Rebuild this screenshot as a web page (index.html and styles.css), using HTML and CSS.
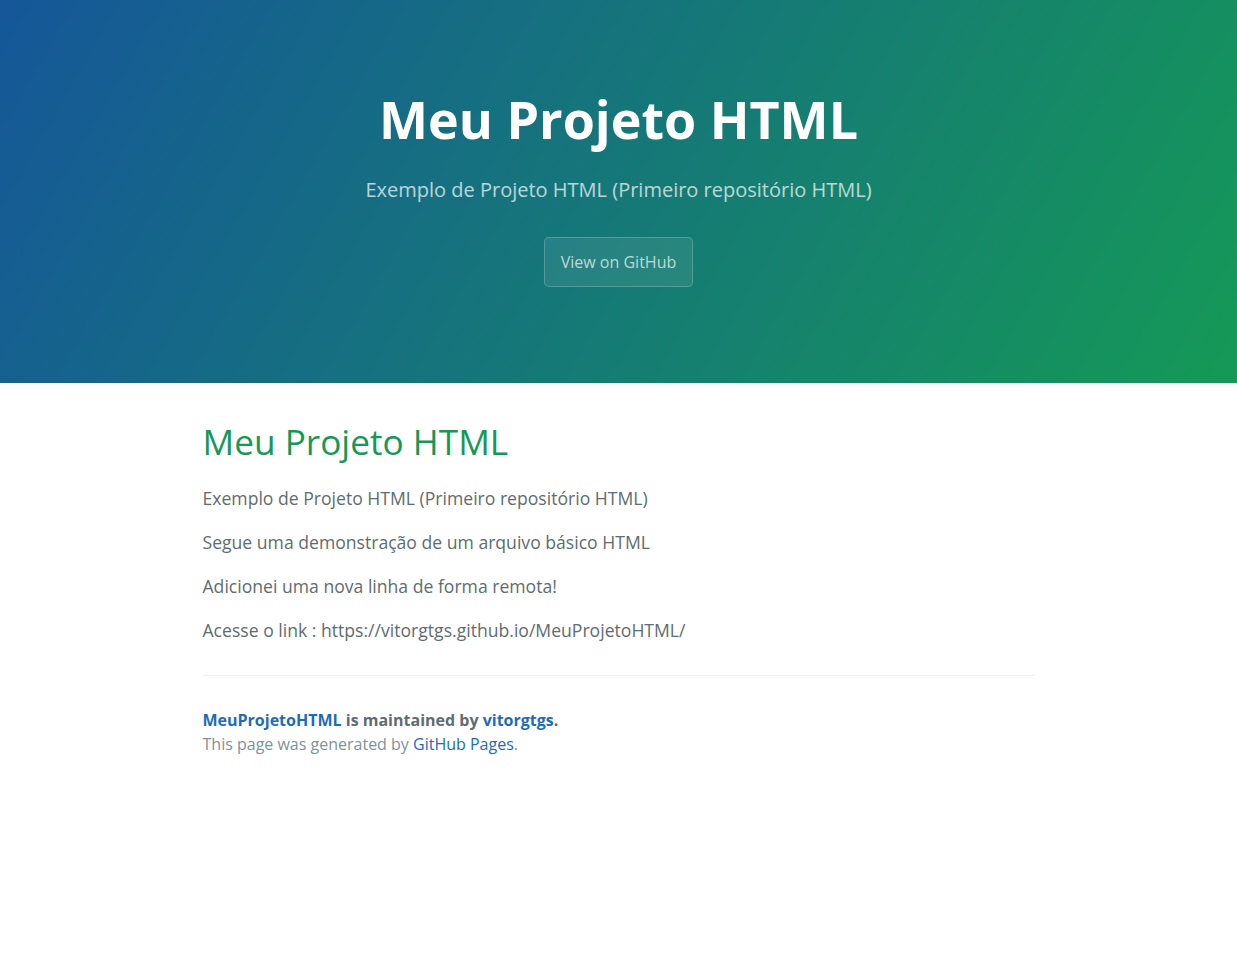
FILE: index.html
```html
<!DOCTYPE html>
<html lang="pt">
<head>
<meta charset="UTF-8">
<title>Meu Projeto HTML</title>
<link rel="stylesheet" href="styles.css">
</head>
<body>
<section class="page-header">
  <h1 class="project-name">Meu Projeto HTML</h1>
  <h2 class="project-tagline">Exemplo de Projeto HTML (Primeiro repositório HTML)</h2>
  <a class="btn" href="#">View on GitHub</a>
</section>
<section class="main-content">
  <h1 class="content-title">Meu Projeto HTML</h1>
  <p>Exemplo de Projeto HTML (Primeiro repositório HTML)</p>
  <p>Segue uma demonstração de um arquivo básico HTML</p>
  <p>Adicionei uma nova linha de forma remota!</p>
  <p>Acesse o link : https://vitorgtgs.github.io/MeuProjetoHTML/</p>
  <footer class="site-footer">
    <span class="site-footer-owner"><a href="#">MeuProjetoHTML</a> is maintained by <a href="#">vitorgtgs</a>.</span>
    <span class="site-footer-credits">This page was generated by <a href="#">GitHub Pages</a>.</span>
  </footer>
</section>
</body>
</html>
```
FILE: styles.css
```css
* { box-sizing: border-box; }
html, body { margin: 0; padding: 0; }
body {
  font-family: "Open Sans", "Helvetica Neue", Helvetica, Arial, sans-serif;
  font-size: 16px;
  line-height: 1.5;
  color: #606c71;
  background: #fff;
}
a { color: #1e6bb8; text-decoration: none; }

.page-header {
  color: #fff;
  text-align: center;
  background-color: #159957;
  background-image: linear-gradient(120deg, #155799, #159957);
  padding: 80px 96px;
  height: 383px;
}
.project-name {
  font-size: 52px;
  font-weight: 700;
  margin: 0 0 1.6px;
  line-height: 1.5;
}
.project-tagline {
  font-size: 20px;
  font-weight: 400;
  opacity: 0.7;
  margin: 16.6px 0 32px;
  line-height: 1.5;
}
.btn {
  display: inline-block;
  color: rgba(255,255,255,0.7);
  background-color: rgba(255,255,255,0.08);
  border: 1px solid rgba(255,255,255,0.2);
  border-radius: 4.8px;
  padding: 12px 16px;
  margin-bottom: 16px;
}

.main-content {
  max-width: 1024px;
  padding: 32px 96px;
  margin: 0 auto;
  font-size: 17.6px;
  word-wrap: break-word;
}
.content-title {
  color: #159957;
  font-weight: 400;
  font-size: 35.2px;
  line-height: 1.5;
  margin: 0 0 17px;
}
.main-content p {
  margin: 0 0 17.6px;
  line-height: 1.5;
}
.site-footer {
  padding-top: 32px;
  margin-top: 32px;
  border-top: 1px solid #eff0f1;
  font-size: 16px;
}
.site-footer-owner {
  display: block;
  font-weight: 700;
}
.site-footer-credits { color: #819198; }
```
